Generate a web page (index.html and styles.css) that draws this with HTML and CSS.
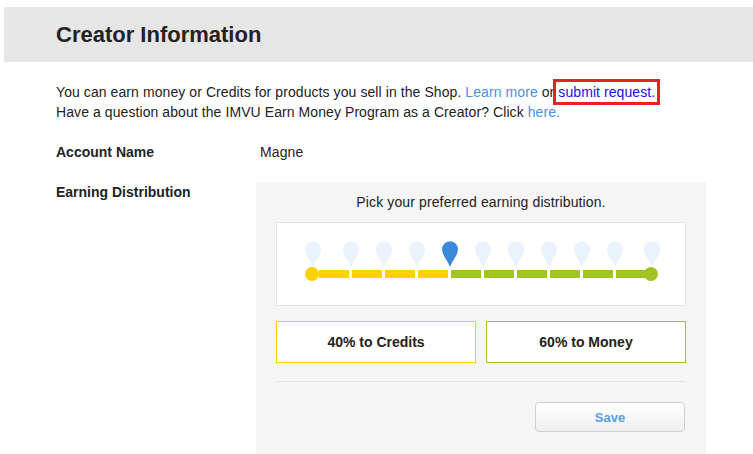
FILE: index.html
```html
<!DOCTYPE html>
<html>
<head>
<meta charset="utf-8">
<link rel="stylesheet" href="styles.css">
</head>
<body>
<header class="band"><h1 class="title">Creator Information</h1></header>
<main class="content">
  <p class="intro">You can earn money or Credits for products you sell in the Shop. <a class="lnk" href="#">Learn more</a> or <a class="req" href="#">submit request.</a><br>Have a question about the IMVU Earn Money Program as a Creator? Click <a class="lnk" href="#">here.</a></p>
  <div class="row">
    <div class="label">Account Name</div>
    <div class="value">Magne</div>
  </div>
  <div class="row">
    <div class="label">Earning Distribution</div>
    <div class="panel">
      <div class="pick">Pick your preferred earning distribution.</div>
      <div class="slider">
        <div class="pins">
          <svg class="pin" viewBox="0 0 16 26"><path d="M8 26 C6 20 0.8 15 0.3 10 A7.9 7.9 0 1 1 15.7 10 C15.2 15 10 20 8 26 Z"/></svg>
          <svg class="pin" viewBox="0 0 16 26"><path d="M8 26 C6 20 0.8 15 0.3 10 A7.9 7.9 0 1 1 15.7 10 C15.2 15 10 20 8 26 Z"/></svg>
          <svg class="pin" viewBox="0 0 16 26"><path d="M8 26 C6 20 0.8 15 0.3 10 A7.9 7.9 0 1 1 15.7 10 C15.2 15 10 20 8 26 Z"/></svg>
          <svg class="pin" viewBox="0 0 16 26"><path d="M8 26 C6 20 0.8 15 0.3 10 A7.9 7.9 0 1 1 15.7 10 C15.2 15 10 20 8 26 Z"/></svg>
          <svg class="pin active" viewBox="0 0 16 26"><path d="M8 26 C6 20 0.8 15 0.3 10 A7.9 7.9 0 1 1 15.7 10 C15.2 15 10 20 8 26 Z"/></svg>
          <svg class="pin" viewBox="0 0 16 26"><path d="M8 26 C6 20 0.8 15 0.3 10 A7.9 7.9 0 1 1 15.7 10 C15.2 15 10 20 8 26 Z"/></svg>
          <svg class="pin" viewBox="0 0 16 26"><path d="M8 26 C6 20 0.8 15 0.3 10 A7.9 7.9 0 1 1 15.7 10 C15.2 15 10 20 8 26 Z"/></svg>
          <svg class="pin" viewBox="0 0 16 26"><path d="M8 26 C6 20 0.8 15 0.3 10 A7.9 7.9 0 1 1 15.7 10 C15.2 15 10 20 8 26 Z"/></svg>
          <svg class="pin" viewBox="0 0 16 26"><path d="M8 26 C6 20 0.8 15 0.3 10 A7.9 7.9 0 1 1 15.7 10 C15.2 15 10 20 8 26 Z"/></svg>
          <svg class="pin" viewBox="0 0 16 26"><path d="M8 26 C6 20 0.8 15 0.3 10 A7.9 7.9 0 1 1 15.7 10 C15.2 15 10 20 8 26 Z"/></svg>
          <svg class="pin" viewBox="0 0 16 26"><path d="M8 26 C6 20 0.8 15 0.3 10 A7.9 7.9 0 1 1 15.7 10 C15.2 15 10 20 8 26 Z"/></svg>
        </div>
        <div class="track">
          <span class="dot yellow"></span>
          <div class="segs">
            <span class="seg yellow"></span><span class="seg yellow"></span><span class="seg yellow"></span><span class="seg yellow"></span>
            <span class="seg green"></span><span class="seg green"></span><span class="seg green"></span><span class="seg green"></span><span class="seg green"></span><span class="seg green"></span>
          </div>
          <span class="dot green end"></span>
        </div>
      </div>
      <div class="choices">
        <div class="choice credits">40% to Credits</div>
        <div class="choice money">60% to Money</div>
      </div>
      <hr class="sep">
      <div class="actions"><button class="save">Save</button></div>
    </div>
  </div>
</main>
</body>
</html>
```
FILE: styles.css
```css
html, body { margin: 0; padding: 0; background: #fff; }
body {
  font-family: "Liberation Sans", Arial, sans-serif;
  color: #222;
  font-size: 14px;
  line-height: 20px;
  overflow: hidden;
}
.band {
  margin: 7px 0 0 4px;
  height: 55px;
  background: #e6e6e6;
  display: flex;
  align-items: center;
  padding-left: 52px;
}
.title {
  margin: 0;
  font-size: 22px;
  font-weight: bold;
  color: #222;
  line-height: 26px;
}
.content { padding: 20px 0 0 56px; }
.intro { margin: 0; letter-spacing: 0.08px; }
.lnk { color: #4a90e2; text-decoration: none; }
.req {
  color: #1a0dee;
  text-decoration: none;
  outline: 3px solid #e8202a;
  outline-offset: 2px;
}
.row { display: flex; margin-top: 20px; }
.label { width: 200px; font-weight: bold; }
.value { padding-left: 4px; letter-spacing: 0.1px; }
.panel {
  width: 410px;
  background: #f5f5f5;
  padding: 10px 20px 30px;
}
.pick { text-align: center; letter-spacing: 0.12px; }
.slider {
  margin-top: 10px;
  background: #fff;
  border: 1px solid #e3e3e3;
  height: 84px;
  padding: 18px 0 0 28px;
  box-sizing: border-box;
}
.pins { display: flex; gap: 17px; height: 26px; }
.pin { width: 16px; height: 26px; fill: #eaf2fc; display: block; }
.pin:first-child { margin-right: 5px; }
.pin:last-child { margin-left: 4px; }
.pin.active { fill: #3a88dc; }
.track { display: flex; align-items: center; height: 14px; }
.dot { width: 14px; height: 14px; border-radius: 50%; display: block; flex: none; position: relative; z-index: 1; }
.dot.end { margin-left: -2px; }
.segs { display: flex; gap: 3px; }
.seg { width: 30px; height: 8px; display: block; }
.yellow { background: #ffd100; }
.green { background: #a2c423; }
.choices { display: flex; gap: 10px; margin-top: 15px; }
.choice {
  flex: 1;
  height: 42px;
  box-sizing: border-box;
  background: #fff;
  display: flex;
  align-items: center;
  justify-content: center;
  font-weight: bold;
}
.credits { border: 1px solid #ffd100; }
.money { border: 1px solid #a2c423; }
.sep { border: 0; border-top: 1px solid #e3e3e3; margin: 18px 0 0; height: 0; }
.actions { display: flex; justify-content: flex-end; margin-top: 20px; }
.save {
  width: 150px;
  height: 30px;
  margin-right: 1px;
  border: 1px solid #cfcfcf;
  border-radius: 4px;
  background: linear-gradient(#fff, #efefef);
  color: #5a9de6;
  font-family: "Liberation Sans", Arial, sans-serif;
  font-size: 13px;
  font-weight: bold;
}
```
